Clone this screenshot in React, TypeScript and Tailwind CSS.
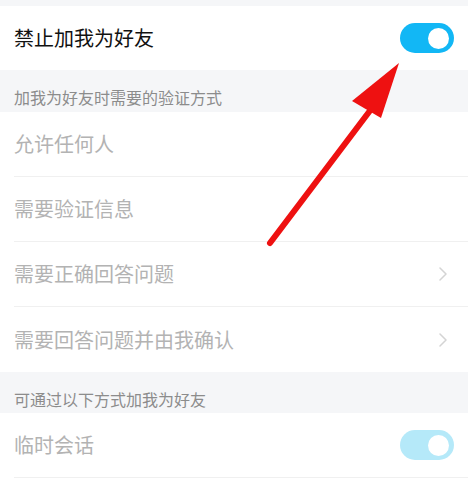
import { FC } from 'react'

const Toggle: FC<{ dim?: boolean }> = ({ dim }) => (
    <div className={`w-[54px] h-[30px] rounded-full flex items-center justify-end pr-[5px] ${dim ? 'bg-[#b5e9f9]' : 'bg-[#12b7f5]'}`}>
        <div className="w-[21px] h-[21px] rounded-full bg-white" />
    </div>
)

const Chevron: FC = () => (
    <svg width="8" height="14" viewBox="0 0 8 14" fill="none">
        <path d="M1 1l6 6-6 6" stroke="#d4d4d4" strokeWidth="1.5" strokeLinecap="round" strokeLinejoin="round" />
    </svg>
)

const options = [
    { label: '允许任何人', arrow: false },
    { label: '需要验证信息', arrow: false },
    { label: '需要正确回答问题', arrow: true },
    { label: '需要回答问题并由我确认', arrow: true },
]

const App: FC = () => {
    return (
        <div
            className="relative w-[468px] h-[484px] overflow-hidden bg-[#f5f6f8]"
            style={{ fontFamily: '"Noto Sans CJK SC", "Noto Sans", sans-serif' }}
        >
            <div className="h-[6px]" />
            <div className="h-[64px] bg-white flex items-center justify-between pl-[14px] pr-[14px]">
                <span className="text-[20px] text-[#111]">禁止加我为好友</span>
                <Toggle />
            </div>
            <div className="h-[42px] flex items-center pt-[12px] pl-[14px]">
                <span className="text-[16px] text-[#8c8c8c]">加我为好友时需要的验证方式</span>
            </div>
            <div className="bg-white">
                {options.map((item, index) => (
                    <div key={item.label} className="pl-[14px]">
                        <div className={`h-[65px] flex items-center justify-between pr-[21px] ${index < options.length - 1 ? 'border-b border-[#f0f0f0]' : ''}`}>
                            <span className="text-[20px] text-[#b3b3b3]">{item.label}</span>
                            {item.arrow && <Chevron />}
                        </div>
                    </div>
                ))}
            </div>
            <div className="h-[41px] flex items-center pt-[13px] pl-[14px]">
                <span className="text-[16px] text-[#8c8c8c]">可通过以下方式加我为好友</span>
            </div>
            <div className="bg-white h-[80px] pl-[14px]">
                <div className="h-[65px] flex items-center justify-between pr-[14px] border-b border-[#f0f0f0]">
                    <span className="text-[20px] text-[#b3b3b3]">临时会话</span>
                    <Toggle dim />
                </div>
            </div>

            {/* red annotation arrow */}
            <svg className="absolute inset-0 pointer-events-none" width="468" height="484">
                <line x1="270" y1="243" x2="372" y2="108" stroke="#ee1111" strokeWidth="6" strokeLinecap="round" />
                <polygon points="399,63 352,101 381,118" fill="#ee1111" />
            </svg>
        </div>
    )
}

export default App
